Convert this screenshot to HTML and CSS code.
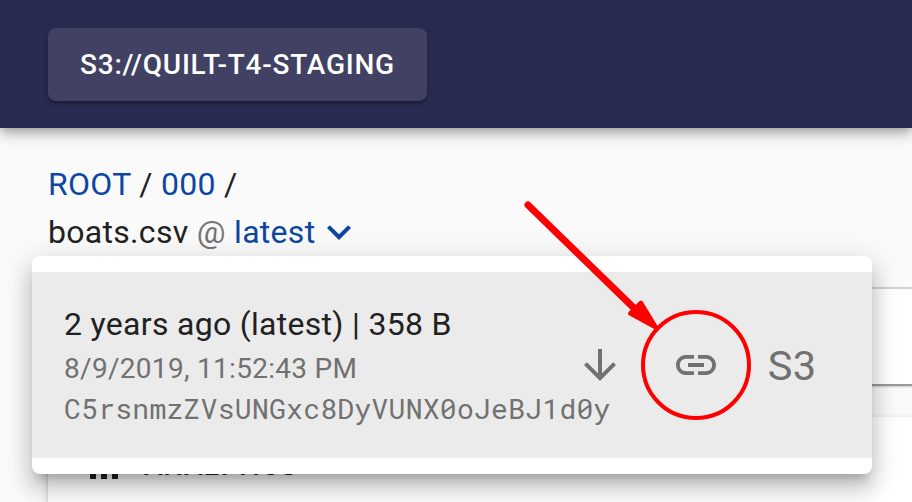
FILE: index.html
```html
<!DOCTYPE html>
<html lang="en">
<head>
<meta charset="utf-8">
<title>boats.csv</title>
<link rel="stylesheet" href="styles.css">
</head>
<body>
<header class="topbar"><button class="bucket">S3://QUILT-T4-STAGING</button></header>
<main class="content">
  <nav class="crumbs">
    <div><a>ROOT</a> / <a>000</a> /</div>
    <div class="file-row">boats.csv&nbsp;<span class="at">@</span>&nbsp;<a>latest</a><svg class="chevron" viewBox="0 0 24 24"><path d="M16.59 8.59L12 13.17 7.41 8.59 6 10l6 6 6-6z"/></svg></div>
  </nav>
  <section class="card code"></section>
  <section class="card analytics">
    <svg class="bars" viewBox="0 0 28 28"><path d="M0 10h6v18H0zM11 0h6v28h-6zM22 16h6v12h-6z"/></svg>
    <span>ANALYTICS</span>
  </section>
</main>
<div class="menu">
  <div class="version">
    <div class="info">
      <div class="primary">2 years ago (latest) | 358 B</div>
      <div class="date">8/9/2019, 11:52:43 PM</div>
      <div class="hash">C5rsnmzZVsUNGxc8DyVUNX0oJeBJ1d0y</div>
    </div>
    <div class="actions">
      <span class="action"><svg viewBox="0 0 24 24"><path d="M20 12l-1.41-1.41L13 16.17V4h-2v12.17l-5.58-5.59L4 12l8 8 8-8z"/></svg></span>
      <span class="action"><svg viewBox="0 0 24 24"><path d="M3.9 12c0-1.71 1.39-3.1 3.1-3.1h4V7H7c-2.76 0-5 2.24-5 5s2.24 5 5 5h4v-1.9H7c-1.71 0-3.1-1.39-3.1-3.1zM8 13h8v-2H8v2zm9-6h-4v1.9h4c1.71 0 3.1 1.39 3.1 3.1s-1.39 3.1-3.1 3.1h-4V17h4c2.76 0 5-2.24 5-5s-2.24-5-5-5z"/></svg></span>
      <span class="action label">S3</span>
    </div>
  </div>
</div>
<svg class="annotation" viewBox="0 0 912 502">
  <circle cx="696" cy="365" r="53" fill="none" stroke="#f00" stroke-width="4"/>
  <path d="M528 205L637 311" stroke="#f00" stroke-width="7" stroke-linecap="round"/>
  <path d="M630 313.500L641 302.500L656.500 328z" fill="#f00" stroke="#f00" stroke-width="4" stroke-linejoin="round"/>
</svg>
</body>
</html>
```

FILE: styles.css
```css
* { box-sizing: border-box; }
body {
  margin: 0;
  height: 502px;
  overflow: hidden;
  position: relative;
  background: #fafafa;
  color: #212121;
  font: 400 32px/48px Roboto, sans-serif;
  letter-spacing: .3px;
}
.topbar {
  height: 128px;
  padding: 28px 48px;
  background: #2a2b50;
  position: relative;
  box-shadow: 0 4px 8px -2px rgba(0,0,0,.2), 0 8px 10px rgba(0,0,0,.14), 0 2px 20px rgba(0,0,0,.12);
}
.bucket {
  display: block;
  width: 379px;
  height: 73px;
  padding: 0;
  border: 0;
  border-radius: 8px;
  background: #404163;
  color: #fff;
  font: 500 28px/49px Roboto, sans-serif;
  letter-spacing: .76px;
  box-shadow: 0 2px 6px rgba(0,0,0,.2), 0 2px 2px rgba(0,0,0,.14), 0 4px 2px -2px rgba(0,0,0,.12);
}
.content { padding: 32px 48px 0; }
.crumbs { height: 127px; white-space: nowrap; }
.crumbs a { color: #0d47a1; }
.file-row { display: flex; }
.at { color: #757575; }
.chevron { width: 48px; height: 48px; fill: #0d47a1; }
.card {
  background: #fff;
  width: 900px;
  border-radius: 8px;
  box-shadow: 0 2px 6px rgba(0,0,0,.2), 0 2px 2px rgba(0,0,0,.14), 0 4px 2px -2px rgba(0,0,0,.12);
}
.code {
  height: 99px;
  border: 2px solid #d3d3d3;
  border-bottom-color: #999;
  border-radius: 0;
  box-shadow: 0 1px 2px rgba(0,0,0,.2);
}
.analytics {
  margin-top: 31px;
  height: 85px;
  padding: 28px 42px 0;
  border-radius: 8px 8px 0 0;
  display: flex;
  gap: 26px;
  font-size: 28px;
  font-weight: 500;
  line-height: 42px;
  letter-spacing: .8px;
}
.bars { width: 28px; height: 28px; margin-top: 6px; fill: currentColor; }
.menu {
  position: absolute;
  left: 32px;
  top: 256px;
  width: 840px;
  height: 218px;
  padding: 16px 0;
  border-radius: 8px;
  background: #fff;
  box-shadow: 0 10px 10px -6px rgba(0,0,0,.2), 0 16px 20px 2px rgba(0,0,0,.14), 0 6px 28px 4px rgba(0,0,0,.12);
}
.version {
  height: 186px;
  padding: 28px 32px;
  display: flex;
  justify-content: space-between;
  align-items: center;
  background: #ebebeb;
  white-space: nowrap;
}
.info { width: 488px; height: 130px; }
.date, .hash { color: #717171; font-size: 28px; line-height: 40px; }
.date { line-height: 41px; }
.hash { font: 28px/40px "Roboto Mono", "DejaVu Sans Mono", monospace; letter-spacing: .28px; }
.actions { display: flex; }
.action {
  width: 96px;
  height: 96px;
  display: flex;
  align-items: center;
  justify-content: center;
  color: #717171;
}
.label { font-size: 41.5px; padding-top: 2px; }
.action svg { width: 48px; height: 48px; fill: currentColor; }
.annotation { position: absolute; left: 0; top: 0; width: 912px; height: 502px; }
```
